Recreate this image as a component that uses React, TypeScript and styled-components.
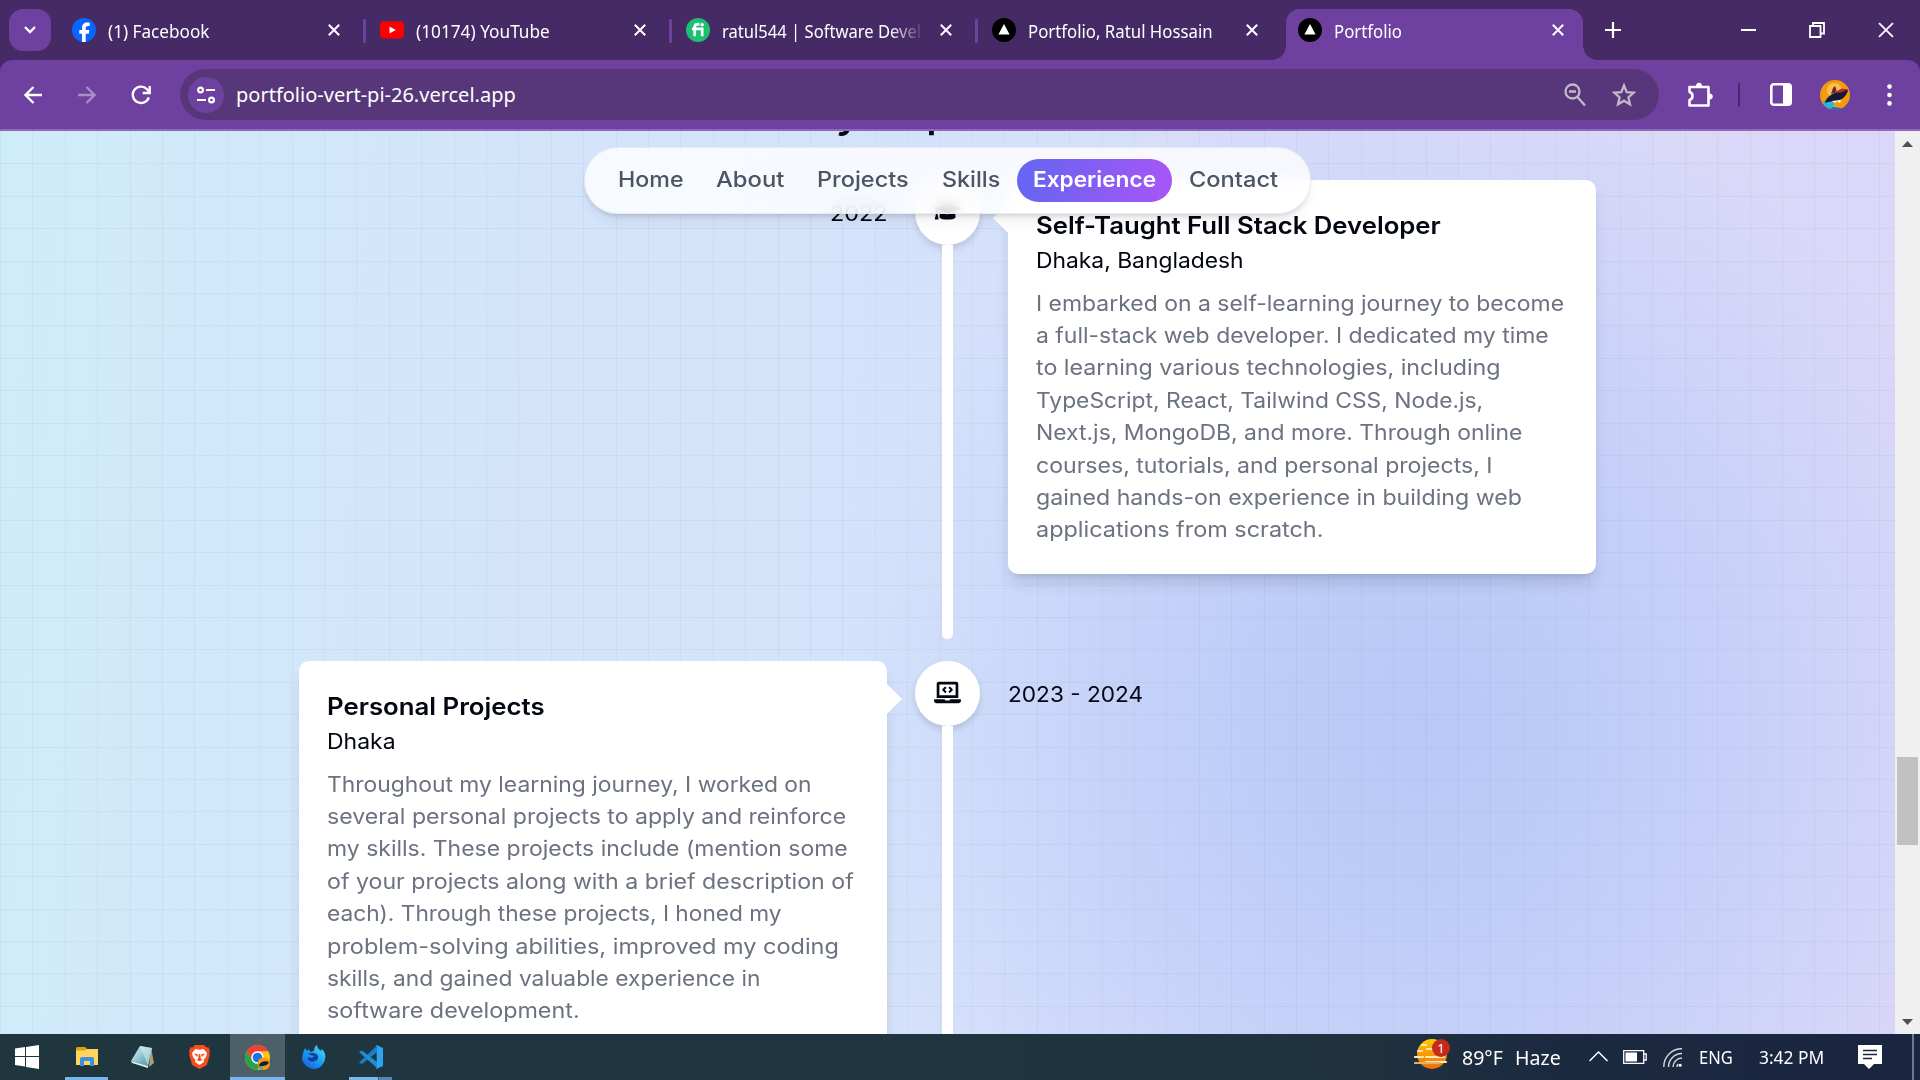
import React, { useLayoutEffect, useRef, useState } from "react";
import styled, { createGlobalStyle, css } from "styled-components";
import { FaGraduationCap, FaLaptopCode } from "react-icons/fa";

const GlobalStyle = createGlobalStyle`
  * { box-sizing: border-box; }
  html, body { margin: 0; padding: 0; overflow: hidden; }
  h2, h3, p { margin: 0; font-weight: inherit; }
  svg { display: block; flex: none; }
`;

const siteFont = `Inter, "Liberation Sans", sans-serif`;
const systemFont = `"Noto Sans", "Open Sans", sans-serif`;

/* ---------- fitted text ---------- */

const Fitted = styled.span`
  display: block;
  white-space: pre;
`;
const Measure = styled.span`
  display: inline-block;
  transform-origin: 0 50%;
`;

/* Stretches one line of text to the given advance width. */
function Fit({ w, children }: { w: number; children: string }) {
  const ref = useRef<HTMLSpanElement>(null);
  const [scale, setScale] = useState(1);
  useLayoutEffect(() => {
    setScale(w / ref.current!.offsetWidth);
  }, [w, children]);
  return (
    <Fitted style={{ width: w }}>
      <Measure ref={ref} style={{ transform: `scaleX(${scale})` }}>{children}</Measure>
    </Fitted>
  );
}

/* ---------- window ---------- */

const Screen = styled.div`
  width: 1920px;
  height: 1080px;
  display: flex;
  flex-direction: column;
  overflow: hidden;
  background: #462a66;
  font-family: ${systemFont};
`;

const TabStrip = styled.div`
  height: 60px;
  display: flex;
  padding: 9px 0 0 9px;
  background: #462a66;
`;

const TabSearch = styled.div`
  width: 42px;
  height: 42px;
  border-radius: 14px;
  background: #6e41a1;
  display: grid;
  place-items: center;
  margin-right: 11px;
`;

const TabBox = styled.div<{ $active?: boolean; $divider?: boolean }>`
  position: relative;
  width: 297px;
  height: 51px;
  margin-right: 9px;
  padding: 0 5px 9px 12px;
  display: flex;
  align-items: center;
  color: #fff;
  border-radius: 14px 14px 0 0;
  &:nth-child(2) {
    padding-left: 10px;
  }
  ${(p) =>
    p.$active &&
    css`
      background: #6e41a1;
      &::before,
      &::after {
        content: "";
        position: absolute;
        bottom: 0;
        width: 14px;
        height: 14px;
      }
      &::before {
        left: -14px;
        background: radial-gradient(circle at 0 0, transparent 13.5px, #6e41a1 14px);
      }
      &::after {
        right: -14px;
        background: radial-gradient(circle at 100% 0, transparent 13.5px, #6e41a1 14px);
      }
    `}
  ${(p) =>
    p.$divider &&
    css`
      &::after {
        content: "";
        position: absolute;
        right: -7px;
        top: 10px;
        width: 3px;
        height: 24px;
        border-radius: 1px;
        background: #6e41a1;
      }
    `}
`;

const TabTitle = styled.div<{ $fade?: boolean }>`
  flex: 1;
  margin-left: 12px;
  margin-top: 2px;
  font-size: 17.5px;
  line-height: 26px;
  ${(p) => p.$fade && css`mask-image: linear-gradient(90deg, #000 168px, transparent 202px);`}
`;

const TabClose = styled.div`
  width: 40px;
  display: grid;
  place-items: center;
`;

const WindowControls = styled.div`
  flex: 1;
  display: flex;
  padding-bottom: 9px;
  align-items: center;
  justify-content: flex-end;
  gap: 53px;
  padding-right: 26px;
`;

const NewTab = styled.div`
  width: 42px;
  height: 42px;
  display: grid;
  place-items: center;
`;

const Toolbar = styled.div`
  height: 71px;
  flex: none;
  display: flex;
  align-items: center;
  padding: 0 0 0 19px;
  border-bottom: 2px solid #8f68b9;
  border-radius: 12px 12px 0 0;
  background: #6e41a1;
`;

const ToolButton = styled.div<{ $w: number }>`
  width: ${(p) => p.$w}px;
  height: 42px;
  display: grid;
  place-items: center;
  flex: none;
`;

const Omnibox = styled.div`
  width: 1479px;
  height: 51px;
  flex: none;
  border-radius: 26px;
  background: #573779;
  display: flex;
  align-items: center;
  padding-left: 8px;
  color: #fff;
`;

const SiteChip = styled.div`
  width: 36px;
  height: 36px;
  border-radius: 50%;
  background: #6e41a1;
  display: grid;
  place-items: center;
  margin-right: 12px;
`;

const Url = styled.div`
  flex: 1;
  font-size: 20px;
  line-height: 28px;
`;

const Divider = styled.div`
  width: 3px;
  height: 24px;
  border-radius: 1px;
  background: #462a66;
  margin: 0 9px 0 6px;
`;

/* ---------- page ---------- */

const Viewport = styled.div`
  height: 903px;
  flex: none;
  display: flex;
`;

const Page = styled.main`
  position: relative;
  width: 1895px;
  height: 903px;
  overflow: hidden;
  font-family: ${siteFont};
  color: #030712;
  background:
    repeating-linear-gradient(90deg, rgba(100, 125, 130, 0.08) 0 1px, transparent 1px 32.4px),
    repeating-linear-gradient(180deg, transparent 0 31.4px, rgba(100, 125, 130, 0.08) 31.4px 32.4px) 0 1px,
    radial-gradient(ellipse 580px 660px at 1425px 590px, #b8c9f8 0%, rgba(184, 202, 248, 0.88) 25%, rgba(184, 202, 248, 0.48) 60%, rgba(184, 202, 248, 0.12) 88%, rgba(184, 202, 248, 0) 100%),
    linear-gradient(94deg, #cfecf9 0%, #d1e8fa 14%, #d4e4fa 30%, #d5e1fb 52%, #d8dbf9 68%, #dad9f8 82%, #dad7f8 100%);
`;

const PageTitle = styled.h2`
  height: 49px;
  display: flex;
  justify-content: center;
  padding-left: 14px;
  font-size: 43px;
  line-height: 49px;
  font-weight: 500;
  margin-top: -44px;
`;

const Timeline = styled.div`
  width: 1297px;
  margin: 44px auto 0;
`;

const Row = styled.section`
  display: grid;
  grid-template-columns: 588px 121px 588px;
  height: 481px;
`;

const Track = styled.div`
  display: flex;
  flex-direction: column;
  align-items: center;
`;

const Node = styled.div`
  position: relative;
  width: 65px;
  height: 65px;
  border-radius: 50%;
  background: #fff;
  display: grid;
  place-items: center;
  padding-bottom: 2px;
  font-size: 27px;
  box-shadow: 0 4px 7px rgba(0, 0, 0, 0.13);
`;

const Line = styled.div`
  width: 11px;
  height: 394px;
  border-radius: 0 0 5px 5px;
  background: #fff;
  position: relative;
`;

const DateLabel = styled.div<{ $end?: boolean }>`
  display: flex;
  justify-content: ${(p) => (p.$end ? "flex-end" : "flex-start")};
  font-size: 21.3px;
  line-height: 32px;
  padding-top: 17px;
`;

const CardBox = styled.article<{ $side: "left" | "right" }>`
  position: relative;
  height: 394px;
  padding: 29px 27px 29px 28px;
  border-radius: 10px;
  background: #fff;
  box-shadow: 0 11px 16px -3px rgba(0, 0, 0, 0.13), 0 4px 6px -4px rgba(0, 0, 0, 0.12);
  &::after {
    content: "";
    position: absolute;
    top: 23px;
    width: 15px;
    height: 30px;
    background: #fff;
    ${(p) =>
      p.$side === "left"
        ? css`right: -15px; clip-path: polygon(0 0, 100% 50%, 0 100%);`
        : css`left: -15px; clip-path: polygon(100% 0, 0 50%, 100% 100%);`}
  }
`;

const CardTitle = styled.h3`
  font-size: 24px;
  line-height: 34px;
  font-weight: 600;
`;
const CardPlace = styled.p`
  font-size: 21.3px;
  line-height: 32px;
  margin-top: 0.6px;
`;
const CardText = styled.p`
  margin-top: 11px;
  font-size: 21.3px;
  line-height: 32.4px;
  color: #6b7280;
`;

const Nav = styled.nav`
  position: absolute;
  top: 16px;
  left: 584px;
  width: 727px;
  height: 67px;
  border-radius: 34px;
  display: flex;
  align-items: center;
  padding-left: 16.5px;
  background: rgba(255, 255, 255, 0.8);
  border: 1px solid rgba(225, 230, 238, 0.8);
  box-shadow: 0 10px 15px -3px rgba(0, 0, 0, 0.06), 0 4px 6px -3px rgba(0, 0, 0, 0.18);
  backdrop-filter: blur(8px);
`;

const NavItem = styled.div<{ $active?: boolean }>`
  height: 43px;
  margin-top: -1px;
  padding: 0 16.3px;
  border-radius: 22px;
  font-size: 21.5px;
  line-height: 41px;
  font-weight: 500;
  color: #4b5563;
  ${(p) =>
    p.$active &&
    css`
      color: #fff;
      font-weight: 600;
      background: linear-gradient(100deg, #6366f1, #a855f7);
    `}
`;

const Scrollbar = styled.div`
  width: 25px;
  height: 903px;
  background: #f0f0f0;
  display: flex;
  flex-direction: column;
  align-items: center;
`;
const ScrollArrow = styled.div`
  height: 25px;
  display: grid;
  place-items: center;
`;
const Thumb = styled.div`
  width: 21px;
  height: 88px;
  margin: 601px 0 164px;
  background: #c1c1c1;
`;

/* ---------- taskbar ---------- */

const Taskbar = styled.div`
  height: 46px;
  flex: none;
  display: flex;
  background: linear-gradient(90deg, #20363f 0%, #20353f 45%, #1f313f 72%, #1b2940 82%, #1a2540 100%);
  color: #fff;
`;

const TaskSlot = styled.div<{ $w: number; $open?: boolean; $active?: boolean; $stack?: boolean }>`
  position: relative;
  width: ${(p) => p.$w}px;
  height: 46px;
  display: grid;
  place-items: center;
  ${(p) => p.$active && css`background: #4d5f67;`}
  ${(p) =>
    (p.$open || p.$active) &&
    css`
      &::after {
        content: "";
        position: absolute;
        bottom: 0;
        left: ${p.$active ? 0 : 7}px;
        right: ${p.$active ? 0 : 7}px;
        height: 3px;
        background: ${p.$stack ? "linear-gradient(90deg, #76b9ed 67%, #3d6388 67% 70%, #5886b4 70%)" : "#76b5f0"};
      }
    `}
`;

const Tray = styled.div`
  margin-left: auto;
  display: flex;
  align-items: center;
  height: 46px;
`;
const Weather = styled.div`
  position: relative;
  width: 36px;
  height: 36px;
  margin-right: 12px;
  margin-top: -4px;
`;
const Badge = styled.span`
  position: absolute;
  right: 0;
  top: 2px;
  width: 18px;
  height: 18px;
  border-radius: 50%;
  background: #c42b1c;
  font-size: 13px;
  line-height: 18px;
  text-align: center;
`;
const TrayText = styled.div<{ $size: number; $w: number; $gap: number; $drop?: boolean }>`
  font-size: ${(p) => p.$size}px;
  line-height: 30px;
  width: ${(p) => p.$w}px;
  margin-right: ${(p) => p.$gap}px;
  padding-top: ${(p) => (p.$drop ? 2 : 0)}px;
`;
const TrayIcon = styled.div<{ $gap: number }>`
  margin-right: ${(p) => p.$gap}px;
`;
const ShowDesktop = styled.div`
  width: 8px;
  height: 46px;
  border-left: 2px solid #717988;
`;

/* ---------- icons ---------- */

const Cross = ({ s = 12, w = 2 }: { s?: number; w?: number }) => (
  <svg width={s} height={s} viewBox="0 0 12 12" stroke="#fff" strokeWidth={(w * 12) / s} fill="none">
    <path d="M.8.8l10.4 10.4M11.2.8L.8 11.2" />
  </svg>
);

const Facebook = () => (
  <svg width="24" height="24" viewBox="0 0 24 24">
    <circle cx="12" cy="12" r="12" fill="#0866ff" />
    <path fill="#fff" d="M10 24v-8.200H7.300V12H10v-1.700c0-4 1.800-5.900 5.500-5.900.7 0 1.700.1 2.200.3v3.300h-1.600c-1.800 0-2.400.7-2.400 2.400V12h3.700l-.7 3.800h-3V24z" />
  </svg>
);
const YouTube = () => (
  <svg width="24" height="24" viewBox="0 0 24 24">
    <rect y="3.500" width="24" height="17" rx="4" fill="#f00" />
    <path fill="#fff" d="M9.500 8.400v7.200l6.200-3.600z" />
  </svg>
);
const Fiverr = () => (
  <svg width="24" height="24" viewBox="0 0 24 24">
    <circle cx="12" cy="12" r="12" fill="#1dbf73" />
    <g fill="none" stroke="#fff" strokeWidth="2.700">
      <path d="M8.700 18.300V9.200c0-2 1-3 3.300-3h1.500M6 10.900h10.200v7.400" />
    </g>
    <circle cx="16.200" cy="6.700" r="1.700" fill="#fff" />
  </svg>
);
const Vercel = () => (
  <svg width="24" height="24" viewBox="0 0 24 24">
    <circle cx="12" cy="12" r="12" />
    <path fill="#fff" d="M12 6l5.600 10.500H6.400z" />
  </svg>
);

const Avatar = ({ size }: { size: number }) => (
  <svg width={size} height={size} viewBox="0 0 30 30">
    <defs>
      <clipPath id={`av${size}`}>
        <circle cx="15" cy="15" r="15" />
      </clipPath>
    </defs>
    <g clipPath={`url(#av${size})`}>
      <rect width="30" height="30" fill="#f59a08" />
      <circle cx="14.500" cy="10.500" r="7.600" fill="#f9c04c" />
      <path d="M3 21l7-1 5 4-3 3 4 3H6z" fill="#27b7dd" />
      <path d="M9 30l4-3 8 1 1 2z" fill="#1769d0" />
      <path d="M5 23c1-6 7-9 12-11 5-3 9-3 11-2-1 6-6 10-12 11-5 0-8 1-11 2z" fill="#14193a" />
      <path d="M15 12l7-3.500 6 1-8 3.500z" fill="#b9242e" />
      <path d="M11 14l2-6 2-2 1.500 4-1.500 3z" fill="#6b2233" />
      <path d="M12 21l3 2 2-2 3 2 1-3z" fill="#fff" />
    </g>
  </svg>
);

const ChromeLogo = () => (
  <svg width="25" height="25" viewBox="0 0 24 24">
    <circle cx="12" cy="12" r="12" fill="#fbc116" />
    <path d="M12 6h10.400A12 12 0 0 0 1.600 6L7 15z" fill="#ea4335" />
    <path d="M1.600 6A12 12 0 0 0 12 24l5-9-10 0z" fill="#2ba24c" />
    <circle cx="12" cy="12" r="6" fill="#fff" />
    <circle cx="12" cy="12" r="4.600" fill="#1a73e8" />
    <g transform="translate(12 12) scale(.4)">
      <circle cx="15" cy="15" r="15" fill="#f59a08" />
      <path d="M3 21c2-8 8-12 16-12 4 0 7 1 8 3-2 6-9 9-24 9z" fill="#14193a" />
      <path d="M3 24l8-3 2 7-6 0z" fill="#27b7dd" />
    </g>
  </svg>
);

const tabs = [
  { icon: <Facebook />, title: "(1) Facebook", w: 102, divider: true },
  { icon: <YouTube />, title: "(10174) YouTube", w: 134, divider: true },
  { icon: <Fiverr />, title: "ratul544 | Software Devel", w: 199, divider: true, fade: true },
  { icon: <Vercel />, title: "Portfolio, Ratul Hossain", w: 185 },
  { icon: <Vercel />, title: "Portfolio", w: 68, active: true },
];

const navItems: { label: string; w: number; active?: boolean }[] = [
  { label: "Home", w: 65.8 },
  { label: "About", w: 68.6 },
  { label: "Projects", w: 91.8 },
  { label: "Skills", w: 58.6 },
  { label: "Experience", w: 123.2, active: true },
  { label: "Contact", w: 89 },
];

type Lines = [string, number][];

const selfTaught: Lines = [
  ["I embarked on a self-learning journey to become", 528],
  ["a full-stack web developer. I dedicated my time", 513],
  ["to learning various technologies, including", 465],
  ["TypeScript, React, Tailwind CSS, Node.js,", 447],
  ["Next.js, MongoDB, and more. Through online", 486],
  ["courses, tutorials, and personal projects, I", 456],
  ["gained hands-on experience in building web", 486],
  ["applications from scratch.", 287],
];
const personal: Lines = [
  ["Throughout my learning journey, I worked on", 485],
  ["several personal projects to apply and reinforce", 519],
  ["my skills. These projects include (mention some", 521],
  ["of your projects along with a brief description of", 527],
  ["each). Through these projects, I honed my", 455],
  ["problem-solving abilities, improved my coding", 512],
  ["skills, and gained valuable experience in", 434],
  ["software development.", 253],
];

function Card(props: { side: "left" | "right"; title: string; titleW: number; place: string; placeW: number; lines: Lines }) {
  return (
    <CardBox $side={props.side}>
      <CardTitle><Fit w={props.titleW}>{props.title}</Fit></CardTitle>
      <CardPlace><Fit w={props.placeW}>{props.place}</Fit></CardPlace>
      <CardText>
        {props.lines.map(([t, w]) => (
          <Fit key={t} w={w}>{t}</Fit>
        ))}
      </CardText>
    </CardBox>
  );
}

export default function App() {
  return (
    <Screen>
      <GlobalStyle />
      <TabStrip>
        <TabSearch>
          <svg width="12" height="8" viewBox="0 0 12 8" fill="none" stroke="#fff" strokeWidth="2.300">
            <path d="M1 1l5 5 5-5" />
          </svg>
        </TabSearch>
        {tabs.map((t, i) => (
          <TabBox key={i} $active={t.active} $divider={t.divider}>
            {t.icon}
            <TabTitle $fade={t.fade}><Fit w={t.w}>{t.title}</Fit></TabTitle>
            <TabClose><Cross s={12} /></TabClose>
          </TabBox>
        ))}
        <NewTab>
          <svg width="16" height="16" viewBox="0 0 16 16" stroke="#fff" strokeWidth="2.200">
            <path d="M8 0v16M0 8h16" />
          </svg>
        </NewTab>
        <WindowControls>
          <svg width="15" height="14" viewBox="0 0 15 14"><path d="M0 6h15v2H0z" fill="#fff" /></svg>
          <svg width="16" height="16" viewBox="0 0 16 16" fill="none" stroke="#fff" strokeWidth="1.800">
            <path d="M1 4h10.500v11H1zM4 4V1h11v10.500h-3.500" />
          </svg>
          <Cross s={16} w={1.8} />
        </WindowControls>
      </TabStrip>

      <Toolbar>
        <ToolButton $w={27}>
          <svg width="18" height="18" viewBox="0 0 18 18" fill="none" stroke="#fff" strokeWidth="2.300"><path d="M18 9H2M9.500 1L1.500 9l8 8" /></svg>
        </ToolButton>
        <ToolButton $w={81}>
          <svg width="18" height="18" viewBox="0 0 18 18" fill="none" stroke="#a98fc8" strokeWidth="2.300"><path d="M0 9h16M8.500 1l8 8-8 8" /></svg>
        </ToolButton>
        <ToolButton $w={28}>
          <svg width="20" height="20" viewBox="0 0 20 20" fill="none" stroke="#fff" strokeWidth="2.400">
            <path d="M17.800 12.300A8.200 8.200 0 1 1 16 4.200L18.500 7M18.700 1v7h-7" />
          </svg>
        </ToolButton>
        <ToolButton $w={25} />
        <Omnibox>
          <SiteChip>
            <svg width="18" height="18" viewBox="0 0 18 18" fill="none" stroke="#fff" strokeWidth="2.200">
              <circle cx="3.500" cy="4" r="2.400" /><path d="M9 4h9M0 14h9" /><circle cx="14.500" cy="14" r="2.400" />
            </svg>
          </SiteChip>
          <Url><Fit w={280}>portfolio-vert-pi-26.vercel.app</Fit></Url>
          <ToolButton $w={48}>
            <svg width="22" height="24" viewBox="0 0 22 24" fill="none" stroke="#c1b8c9" strokeWidth="2.300">
              <circle cx="8.500" cy="8.500" r="7" /><path d="M13 13.500l8 9M5 8.500h7" />
            </svg>
          </ToolButton>
          <ToolButton $w={49}>
            <svg width="24" height="24" viewBox="0 0 24 24" fill="none" stroke="#c1b8c9" strokeWidth="2.300">
              <path d="M12 2.500l2.700 6.600 7.100.6-5.400 4.700 1.600 7L12 17.700l-6 3.700 1.600-7-5.400-4.700 7.100-.6z" />
            </svg>
          </ToolButton>
          <ToolButton $w={11} />
        </Omnibox>
        <ToolButton $w={8} />
        <ToolButton $w={65}>
          <svg width="26" height="26" viewBox="0 0 26 26" fill="none" stroke="#fff" strokeWidth="2.600" strokeLinejoin="round">
            <path d="M2.500 5h19v18.500h-19v-5.500c4-1 4-7 0-8z" />
            <path d="M9 4.500a3 3.800 0 0 1 6 0zM22 11.500a3.800 3 0 0 1 0 6z" fill="#fff" stroke="none" />
          </svg>
        </ToolButton>
        <Divider />
        <ToolButton $w={63}>
          <svg width="22" height="23" viewBox="0 0 22 23"><rect x="1.300" y="1.300" width="19.400" height="20.400" rx="2.500" fill="none" stroke="#fff" strokeWidth="2.600" /><path d="M13 1h7v21h-7z" fill="#fff" /></svg>
        </ToolButton>
        <ToolButton $w={46}><Avatar size={30} /></ToolButton>
        <ToolButton $w={62}>
          <svg width="5" height="22" viewBox="0 0 5 22" fill="#fff"><circle cx="2.500" cy="2.600" r="2.300" /><circle cx="2.500" cy="11" r="2.300" /><circle cx="2.500" cy="19.400" r="2.300" /></svg>
        </ToolButton>
      </Toolbar>

      <Viewport>
        <Page>
          <PageTitle><Fit w={322}>My Experience</Fit></PageTitle>
          <Timeline>
            <Row>
              <DateLabel $end><Fit w={57}>2022</Fit></DateLabel>
              <Track><Node><FaGraduationCap /></Node><Line /></Track>
              <Card side="right" title="Self-Taught Full Stack Developer" titleW={405} place="Dhaka, Bangladesh" placeW={208} lines={selfTaught} />
            </Row>
            <Row>
              <Card side="left" title="Personal Projects" titleW={218} place="Dhaka" placeW={69} lines={personal} />
              <Track><Node><FaLaptopCode /></Node><Line /></Track>
              <DateLabel><Fit w={135}>2023 - 2024</Fit></DateLabel>
            </Row>
          </Timeline>
          <Nav>
            {navItems.map((n) => (
              <NavItem key={n.label} $active={n.active}><Fit w={n.w}>{n.label}</Fit></NavItem>
            ))}
          </Nav>
        </Page>
        <Scrollbar>
          <ScrollArrow><svg width="11" height="6" viewBox="0 0 11 6"><path d="M0 6l5.500-6L11 6z" fill="#505050" /></svg></ScrollArrow>
          <Thumb />
          <ScrollArrow><svg width="11" height="6" viewBox="0 0 11 6"><path d="M0 0l5.500 6L11 0z" fill="#505050" /></svg></ScrollArrow>
        </Scrollbar>
      </Viewport>

      <Taskbar>
        <TaskSlot $w={54}>
          <svg width="24" height="24" viewBox="0 0 24 24" fill="#fff"><path d="M0 3.500l10-1.400V11H0zM11 2l13-2v11H11zM0 12h10v9.500L0 20zM11 12h13v12l-13-2z" /></svg>
        </TaskSlot>
        <TaskSlot $w={4} />
        <TaskSlot $w={57} $open>
          <svg width="22" height="20" viewBox="0 0 22 20">
            <path d="M0 1.500Q0 0 1.500 0H9l2 2v4H0z" fill="#e0a008" /><path d="M0 3.500h9l2-1.500h11v16H0z" fill="#ffd45f" />
            <path d="M4 19v-7q0-2 2-2h10q2 0 2 2v7h-4v-5H8v5z" fill="#3f8fdc" />
          </svg>
        </TaskSlot>
        <TaskSlot $w={56}>
          <svg width="24" height="24" viewBox="0 0 24 24">
            <defs><linearGradient id="np" x1="0" y1="0" x2="1" y2="1"><stop offset="0" stopColor="#e6f5f8" /><stop offset=".5" stopColor="#8fc4d2" /><stop offset="1" stopColor="#3b8ca0" /></linearGradient></defs>
            <path d="M20 3l3 15-5 4z" fill="#b59a6c" /><path d="M9 1l12 2-4 18L0 16z" fill="url(#np)" /><path d="M9 1l12 2-4 18z" fill="#d8eef3" opacity=".55" /><path d="M0 16l17 5v2L1 18z" fill="#e8f1f2" />
          </svg>
        </TaskSlot>
        <TaskSlot $w={57}>
          <svg width="21" height="24" viewBox="0 0 21 24">
            <path d="M6 0h9l2.500 2.500 2-.3L21 6l-.7 2 .5 2-3 10-7.300 4-7.300-4-3-10 .5-2L0 6l1.500-3.800 2 .3z" fill="#fb4a1c" />
            <path d="M6.500 4l4 .8 4-.8 3.500 4-1 4-2.500 3 .5 2-4.500 3-4.500-3 .5-2L4 12 3 8z" fill="#fff" />
            <path d="M5 8.500l4 .8-1 2.700zM16 8.500l-4 .8 1 2.700zM9.800 9h1.400l.8 5 1.500 1-3 1.300-3-1.300 1.500-1z" fill="#fb4a1c" />
          </svg>
        </TaskSlot>
        <TaskSlot $w={2} />
        <TaskSlot $w={55} $active><ChromeLogo /></TaskSlot>
        <TaskSlot $w={57}>
          <svg width="24" height="24" viewBox="0 0 24 24">
            <defs><linearGradient id="ff" x1="1" y1="0" x2=".2" y2="1"><stop offset="0" stopColor="#58e5f8" /><stop offset=".5" stopColor="#1ba3f5" /><stop offset="1" stopColor="#1461dd" /></linearGradient></defs>
            <path d="M1 8l2-5 2 3 2-2 1 3 4-1c0-3 1-5 3-6 0 3 2 4 4 6l1-2c3 3 4 7 3 10-1 6-6 10-11 10S0 19 0 13z" fill="url(#ff)" />
            <path d="M6 8c3 1 5-1 8 1 3 1 3 6-1 7-4 2-8-1-7-4l4 1 2-2-4-1z" fill="#173b9f" />
          </svg>
        </TaskSlot>
        <TaskSlot $w={57} $open $stack>
          <svg width="24" height="24" viewBox="0 0 24 24">
            <path d="M1 16.500L17.500 1 18 7 3 19 0 17.500z" fill="#1681c4" /><path d="M0 7l3-1.500L18 17v6z" fill="#1c8fd3" /><path d="M17.500 0L24 3v18l-6.500 3-.8-1c.5.200 1 0 1-.8V2c0-.8-.5-1-1-1z" fill="#2ba5f2" />
          </svg>
        </TaskSlot>
        <Tray>
          <Weather>
            <svg width="36" height="36" viewBox="0 0 36 36">
              <defs><linearGradient id="sun" x1="0" y1="0" x2="0" y2="1"><stop offset="0" stopColor="#ffc800" /><stop offset="1" stopColor="#f06c0c" /></linearGradient></defs>
              <circle cx="18" cy="17" r="15" fill="url(#sun)" />
              <g stroke="#ffe9b8" strokeWidth="2.200" strokeLinecap="round"><path d="M8 8h4M13 12h9M1 20h8M12 20h18M4 14h4M12 25h20" /><path d="M1 26h24" stroke="#dcb274" /></g>
            </svg>
            <Badge>1</Badge>
          </Weather>
          <TrayText $size={20} $w={41} $gap={12} $drop><Fit w={41}>89°F</Fit></TrayText>
          <TrayText $size={20} $w={46} $gap={28} $drop><Fit w={46}>Haze</Fit></TrayText>
          <TrayIcon $gap={15}><svg width="19" height="14" viewBox="0 0 19 14" fill="none" stroke="#fff" strokeWidth="1.500"><path d="M.5 11L9.500 2l9 9" /></svg></TrayIcon>
          <TrayIcon $gap={16}>
            <svg width="24" height="14" viewBox="0 0 24 14"><path d="M.7.7h20v12.600h-20zM21 4h2.200v6H21" fill="none" stroke="#fff" strokeWidth="1.300" /><path d="M2.500 2.500H14v9H2.500z" fill="#fff" /></svg>
          </TrayIcon>
          <TrayIcon $gap={17}>
            <svg width="19" height="19" viewBox="0 0 19 19" fill="none" stroke="#d5dae0" strokeWidth="1.400">
              <path d="M.8 19A18 18 0 0 1 19 .8M5.500 19A13.500 13.500 0 0 1 19 5.500M10 19a9 9 0 0 1 9-9" /><path d="M14 19a5 5 0 0 1 1-3" /><circle cx="17.200" cy="17.200" r="1.500" fill="#fff" stroke="none" />
            </svg>
          </TrayIcon>
          <TrayText $size={17.5} $w={33} $gap={27}><Fit w={34}>ENG</Fit></TrayText>
          <TrayText $size={17.5} $w={65} $gap={34}><Fit w={65.5}>3:42 PM</Fit></TrayText>
          <TrayIcon $gap={30}>
            <svg width="24" height="24" viewBox="0 0 24 24"><path d="M0 0h24v19h-8l-5 5-5-5H0z" fill="#fff" /><path d="M5 5.500h14M5 9.500h14M5 13.500h9" stroke="#1a2740" strokeWidth="1.300" /></svg>
          </TrayIcon>
          <ShowDesktop />
        </Tray>
      </Taskbar>
    </Screen>
  );
}
